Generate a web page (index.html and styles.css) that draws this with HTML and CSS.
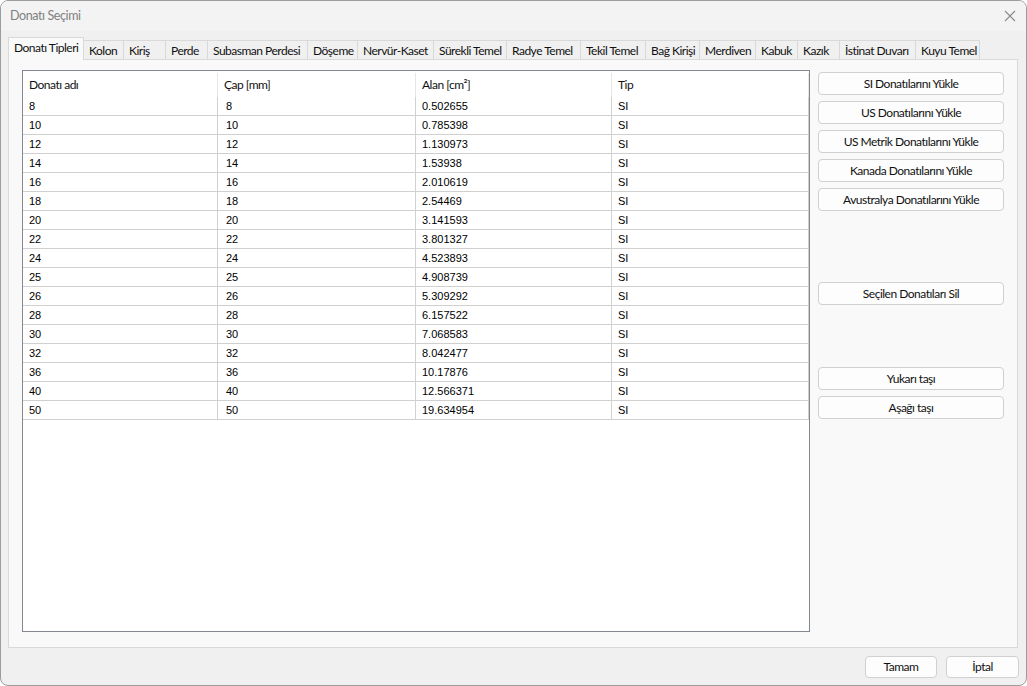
FILE: index.html
```html
<!DOCTYPE html>
<html lang="tr">
<head>
<meta charset="utf-8">
<title>Donatı Seçimi</title>
<link rel="stylesheet" href="styles.css">
</head>
<body>
<div class="window">
  <div class="titlebar">
    <span class="title">Donatı Seçimi</span>
    <svg class="close" width="12" height="12" viewBox="0 0 12 12"><path d="M1 1 L11 11 M11 1 L1 11" stroke="#8a8a8a" stroke-width="1.1" fill="none"/></svg>
  </div>
  <div class="content">
    <div class="tabstrip">
      <div class="tab active">Donatı Tipleri</div>
      <div class="tab">Kolon</div>
      <div class="tab">Kiriş</div>
      <div class="tab">Perde</div>
      <div class="tab">Subasman Perdesi</div>
      <div class="tab">Döşeme</div>
      <div class="tab">Nervür-Kaset</div>
      <div class="tab">Sürekli Temel</div>
      <div class="tab">Radye Temel</div>
      <div class="tab">Tekil Temel</div>
      <div class="tab">Bağ Kirişi</div>
      <div class="tab">Merdiven</div>
      <div class="tab">Kabuk</div>
      <div class="tab">Kazık</div>
      <div class="tab">İstinat Duvarı</div>
      <div class="tab">Kuyu Temel</div>
    </div>
    <div class="panel">
      <div class="listview">
        <div class="lv-header">
          <div class="hcell">Donatı adı</div>
          <div class="hcell">Çap [mm]</div>
          <div class="hcell">Alan [cm²]</div>
          <div class="hcell">Tip</div>
        </div>
        <div class="lv-row"><div class="cell">8</div><div class="cell">8</div><div class="cell">0.502655</div><div class="cell">SI</div></div>
        <div class="lv-row"><div class="cell">10</div><div class="cell">10</div><div class="cell">0.785398</div><div class="cell">SI</div></div>
        <div class="lv-row"><div class="cell">12</div><div class="cell">12</div><div class="cell">1.130973</div><div class="cell">SI</div></div>
        <div class="lv-row"><div class="cell">14</div><div class="cell">14</div><div class="cell">1.53938</div><div class="cell">SI</div></div>
        <div class="lv-row"><div class="cell">16</div><div class="cell">16</div><div class="cell">2.010619</div><div class="cell">SI</div></div>
        <div class="lv-row"><div class="cell">18</div><div class="cell">18</div><div class="cell">2.54469</div><div class="cell">SI</div></div>
        <div class="lv-row"><div class="cell">20</div><div class="cell">20</div><div class="cell">3.141593</div><div class="cell">SI</div></div>
        <div class="lv-row"><div class="cell">22</div><div class="cell">22</div><div class="cell">3.801327</div><div class="cell">SI</div></div>
        <div class="lv-row"><div class="cell">24</div><div class="cell">24</div><div class="cell">4.523893</div><div class="cell">SI</div></div>
        <div class="lv-row"><div class="cell">25</div><div class="cell">25</div><div class="cell">4.908739</div><div class="cell">SI</div></div>
        <div class="lv-row"><div class="cell">26</div><div class="cell">26</div><div class="cell">5.309292</div><div class="cell">SI</div></div>
        <div class="lv-row"><div class="cell">28</div><div class="cell">28</div><div class="cell">6.157522</div><div class="cell">SI</div></div>
        <div class="lv-row"><div class="cell">30</div><div class="cell">30</div><div class="cell">7.068583</div><div class="cell">SI</div></div>
        <div class="lv-row"><div class="cell">32</div><div class="cell">32</div><div class="cell">8.042477</div><div class="cell">SI</div></div>
        <div class="lv-row"><div class="cell">36</div><div class="cell">36</div><div class="cell">10.17876</div><div class="cell">SI</div></div>
        <div class="lv-row"><div class="cell">40</div><div class="cell">40</div><div class="cell">12.566371</div><div class="cell">SI</div></div>
        <div class="lv-row"><div class="cell">50</div><div class="cell">50</div><div class="cell">19.634954</div><div class="cell">SI</div></div>
      </div>
      <div class="side">
        <button class="btn">SI Donatılarını Yükle</button>
        <button class="btn">US Donatılarını Yükle</button>
        <button class="btn">US Metrik Donatılarını Yükle</button>
        <button class="btn">Kanada Donatılarını Yükle</button>
        <button class="btn">Avustralya Donatılarını Yükle</button>
        <button class="btn btn-delete">Seçilen Donatıları Sil</button>
        <button class="btn btn-move">Yukarı taşı</button>
        <button class="btn">Aşağı taşı</button>
      </div>
    </div>
    <div class="footer">
      <button class="btn btn-ok">Tamam</button>
      <button class="btn btn-cancel">İptal</button>
    </div>
  </div>
</div>
</body>
</html>
```

FILE: styles.css
```css
html, body {
  margin: 0;
  padding: 0;
  background: #ffffff;
}

body {
  font-family: Lato, "Noto Sans", sans-serif;
  font-size: 12px;
  letter-spacing: -0.5px;
  color: #111;
}

.window {
  width: 1027px;
  height: 686px;
  box-sizing: border-box;
  border: 1px solid #9c9c9c;
  border-radius: 8px;
  background: #f0f0f0;
  overflow: hidden;
  display: flex;
  flex-direction: column;
}

.titlebar {
  height: 30px;
  flex: none;
  background: #f3f3f3;
  display: flex;
  align-items: center;
  justify-content: space-between;
  padding: 0 10px 0 9px;
}

.title {
  color: #808080;
  font-size: 12.5px;
  letter-spacing: -0.4px;
  line-height: 16px;
  margin-top: -1px;
}

.close {
  display: block;
  margin-top: -1px;
}

.content {
  flex: 1;
  padding: 6px 8px 0 7px;
  display: flex;
  flex-direction: column;
}

.tabstrip {
  display: grid;
  grid-template-columns: 76px 40px 42px 42px 100px 50px 76px 73px 74px 65px 54px 56px 42px 42px 76px 64px;
  height: 22px;
  align-items: end;
  position: relative;
  z-index: 2;
}

.tab {
  box-sizing: border-box;
  height: 19px;
  border: 1px solid #d9d9d9;
  border-bottom: none;
  border-left: none;
  background: #f0f0f0;
  padding-left: 5px;
  line-height: 19px;
  white-space: nowrap;
  overflow: hidden;
}

.tab.active {
  height: 23px;
  margin-bottom: -1px;
  border-left: 1px solid #d9d9d9;
  background: #f9f9f9;
  padding-left: 5px;
  line-height: 20px;
}

.panel {
  box-sizing: border-box;
  height: 589px;
  border: 1px solid #d9d9d9;
  background: #f9f9f9;
  padding: 10px 13px 0 13px;
  display: flex;
  gap: 8px;
  position: relative;
  z-index: 1;
}

.listview {
  box-sizing: border-box;
  width: 788px;
  height: 562px;
  border: 1px solid #828790;
  background: #ffffff;
  font-family: "Liberation Sans", Arial, sans-serif;
  font-size: 11px;
  letter-spacing: 0;
  color: #000;
}

.lv-header,
.lv-row {
  display: grid;
  grid-template-columns: 195px 198px 196px 197px;
}

.lv-header {
  height: 26px;
  font-family: Lato, "Noto Sans", sans-serif;
  font-size: 12px;
  letter-spacing: -0.5px;
  color: #111;
}

.hcell {
  box-sizing: border-box;
  padding: 3px 0 0 6px;
  line-height: 18px;
  border-right: 1px solid #e6e6e6;
  margin: 2px 0 0 0;
  white-space: nowrap;
}

.lv-row {
  height: 19px;
  box-sizing: border-box;
  border-bottom: 1px solid #d0d0d0;
}

.cell {
  box-sizing: border-box;
  border-right: 1px solid #d0d0d0;
  padding-left: 6px;
  line-height: 18px;
  white-space: nowrap;
}

.lv-row .cell:nth-child(2) {
  padding-left: 8px;
}

.side {
  width: 186px;
  display: flex;
  flex-direction: column;
  gap: 6px;
  padding-top: 2px;
}

.btn {
  box-sizing: border-box;
  height: 23px;
  border: 1px solid #d0d0d0;
  border-radius: 4px;
  background: #fdfdfd;
  font-family: Lato, "Noto Sans", sans-serif;
  font-size: 12px;
  letter-spacing: -0.5px;
  color: #111;
  padding: 0;
  line-height: 20px;
  white-space: nowrap;
}

.btn-delete {
  margin-top: 65px;
}

.btn-move {
  margin-top: 56px;
}

.footer {
  display: flex;
  justify-content: flex-end;
  gap: 9px;
  margin-top: 8px;
  margin-right: -1px;
}

.btn-ok,
.btn-cancel {
  height: 22px;
}

.btn-ok {
  width: 72px;
}

.btn-cancel {
  width: 73px;
}
```
